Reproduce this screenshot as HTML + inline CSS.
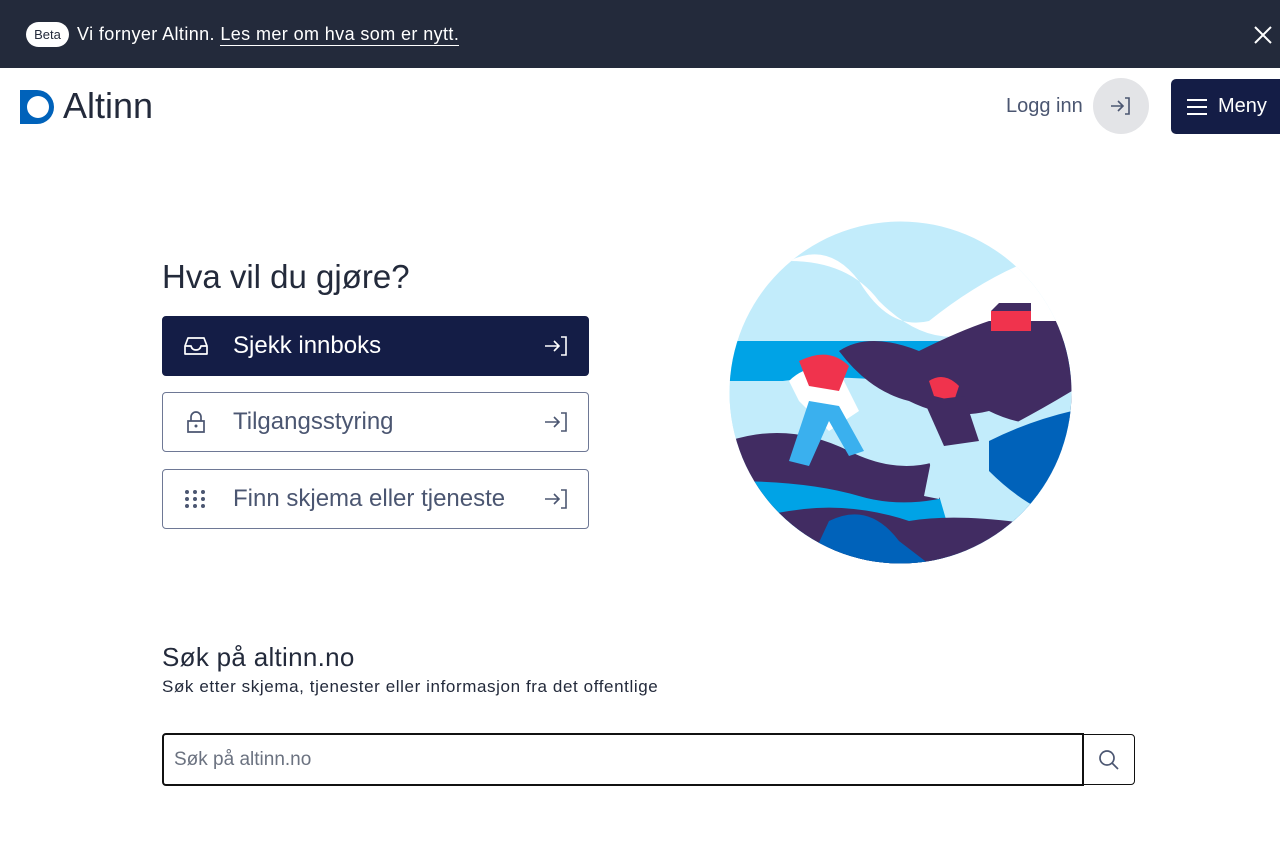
<!DOCTYPE html>
<html><head><meta charset="utf-8"><style>
*{box-sizing:border-box;margin:0;padding:0}
body{width:1280px;height:853px;overflow:hidden;background:#fff;font-family:"Liberation Sans",sans-serif;position:relative}
.banner{position:absolute;left:0;top:0;width:1280px;height:68px;background:#232a3b;color:#fff}
.beta{position:absolute;left:26px;top:22px;width:43px;height:25px;border-radius:13px;background:#fff;color:#232a3b;font-size:13px;line-height:25px;text-align:center}
.btxt{position:absolute;left:77px;top:23px;font-size:18px;line-height:22px;white-space:nowrap;letter-spacing:0.4px}
.btxt u{text-decoration:none;border-bottom:1.5px solid #fff;padding-bottom:1px}
.x{position:absolute;left:1253px;top:25px}
.logo{position:absolute;left:20px;top:90px}
.alt{position:absolute;left:63px;top:86px;font-size:36px;color:#232a3b;line-height:40px}
.logg{position:absolute;left:1006px;top:95px;font-size:20px;color:#4b5671}
.lcirc{position:absolute;left:1093px;top:78px;width:56px;height:56px;border-radius:50%;background:#e3e4e7}
.meny{position:absolute;left:1171px;top:79px;width:120px;height:55px;border-radius:5px;background:#141d46;color:#fff;font-size:20px}
h1{position:absolute;left:162px;top:258px;font-size:33px;font-weight:normal;color:#232a3b}
.btn{position:absolute;left:162px;width:427px;height:60px;border:1px solid #6e7895;border-radius:4px;color:#4b5671;font-size:24px}
.btn span{position:absolute;left:70px;top:15px;line-height:28px}
.btn .ic{position:absolute;left:20px;top:18px}
.btn .ar{position:absolute;left:381px;top:18px}
.dark{background:#141d46;color:#fff;border-color:#141d46}
h2{position:absolute;left:162px;top:642px;font-size:26px;font-weight:normal;color:#232a3b;letter-spacing:0.3px}
.sub{position:absolute;left:162px;top:677px;font-size:17px;color:#232a3b;letter-spacing:0.6px}
.inp{position:absolute;left:162px;top:733px;width:922px;height:53px;border:2px solid #111;border-radius:4px 0 0 4px;font-size:19px;color:#6b7280;padding:14px 10px}
.sb{position:absolute;left:1082px;top:734px;width:53px;height:51px;border:1.5px solid #111;border-radius:0 4px 4px 0}
</style></head><body>
<div class="banner">
<div class="beta">Beta</div>
<div class="btxt">Vi fornyer Altinn. <u>Les mer om hva som er nytt.</u></div>
<svg class="x" width="20" height="20" viewBox="0 0 20 20"><path d="M2 2L18 18M18 2L2 18" stroke="#fff" stroke-width="2"/></svg>
</div>
<svg class="logo" width="34" height="34" viewBox="0 0 34 34"><path d="M0 0H17A17 17 0 0 1 17 34H0Z" fill="#0062ba"/><circle cx="18" cy="17" r="11" fill="#fff"/></svg>
<div class="alt">Altinn</div>
<div class="logg">Logg inn</div>
<div class="lcirc"><svg style="position:absolute;left:17px;top:18px" width="22" height="20" viewBox="0 0 22 20"><path d="M1 10H13M8 5L13 10L8 15M15 2H19V18H15" fill="none" stroke="#4b5671" stroke-width="1.6"/></svg></div>
<div class="meny"><svg style="position:absolute;left:16px;top:19px" width="20" height="18" viewBox="0 0 20 18"><path d="M0 2H20M0 9H20M0 16H20" stroke="#fff" stroke-width="2"/></svg><span style="position:absolute;left:47px;top:16px">Meny</span></div>

<h1>Hva vil du gjøre?</h1>
<div class="btn dark" style="top:316px"><svg class="ic" width="26" height="22" viewBox="0 0 26 22"><path d="M2 11L5 3H21L24 11V19H2ZM2 11H8Q9 15 13 15Q17 15 18 11H24" fill="none" stroke="#fff" stroke-width="1.7" stroke-linejoin="round"/></svg><span>Sjekk innboks</span><svg class="ar" width="24" height="22" viewBox="0 0 24 22"><path d="M1 11H15M10 6L15 11L10 16M17 2H22V20H17" fill="none" stroke="#fff" stroke-width="1.6"/></svg></div>
<div class="btn" style="top:392px"><svg class="ic" width="26" height="22" viewBox="0 0 26 22"><path d="M8 10V6A5 5 0 0 1 18 6V10M5 10H21V21H5Z" fill="none" stroke="#4b5671" stroke-width="1.7"/><circle cx="13" cy="15" r="1.5" fill="#4b5671"/></svg><span>Tilgangsstyring</span><svg class="ar" width="24" height="22" viewBox="0 0 24 22"><path d="M1 11H15M10 6L15 11L10 16M17 2H22V20H17" fill="none" stroke="#4b5671" stroke-width="1.6"/></svg></div>
<div class="btn" style="top:469px"><svg class="ic" width="26" height="22" viewBox="0 0 26 22" fill="#4b5671"><circle cx="4" cy="4" r="2"/><circle cx="12" cy="4" r="2"/><circle cx="20" cy="4" r="2"/><circle cx="4" cy="11" r="2"/><circle cx="12" cy="11" r="2"/><circle cx="20" cy="11" r="2"/><circle cx="4" cy="18" r="2"/><circle cx="12" cy="18" r="2"/><circle cx="20" cy="18" r="2"/></svg><span>Finn skjema eller tjeneste</span><svg class="ar" width="24" height="22" viewBox="0 0 24 22"><path d="M1 11H15M10 6L15 11L10 16M17 2H22V20H17" fill="none" stroke="#4b5671" stroke-width="1.6"/></svg></div>

<svg style="position:absolute;left:729px;top:221px" width="343" height="343" viewBox="0 0 343 343">
<defs><clipPath id="c"><circle cx="171.5" cy="171.5" r="171"/></clipPath></defs>
<g clip-path="url(#c)">
<rect width="343" height="343" fill="#c2ecfb"/>
<path d="M60 40Q100 20 130 60Q160 110 200 100Q250 60 300 40L343 60V110Q300 90 250 110Q200 130 150 80Q120 40 60 40Z" fill="#fff"/>
<rect y="120" width="343" height="40" fill="#00a3e6"/>
<path d="M0 170Q80 150 160 160Q240 130 343 150V343H0Z" fill="#c2ecfb"/>
<path d="M110 130Q140 110 190 130Q230 110 260 100H343V200Q300 210 260 190Q220 200 180 180Q140 170 110 130Z" fill="#412c62"/>
<rect x="262" y="90" width="40" height="20" fill="#f0334d"/><path d="M262 90L270 82H302V90Z" fill="#412c62"/>
<path d="M0 220Q60 200 120 230Q180 260 230 230Q280 210 343 230V343H0Z" fill="#412c62"/>
<path d="M0 260Q80 260 130 275Q180 290 240 270Q300 250 343 270V343H0Z" fill="#00a3e6"/>
<path d="M200 240Q260 220 343 170V343H230Z" fill="#c2ecfb"/>
<path d="M260 220Q300 200 343 190V300Q300 290 260 250Z" fill="#0062ba"/>
<path d="M60 290Q120 280 180 300Q240 290 343 310V343H0V300Z" fill="#412c62"/>
<path d="M100 300Q140 280 170 320L200 343H80Z" fill="#0062ba"/>
<path d="M60 160Q80 140 110 150L130 190L100 210L70 180Z" fill="#fff"/>
<path d="M70 140Q100 125 120 145L110 170L80 165Z" fill="#f0334d"/>
<path d="M80 180L60 240L80 245L100 200L120 235L135 230L110 185Z" fill="#3ab0ee"/>
<path d="M200 160Q215 150 230 165L225 180L205 175Z" fill="#f0334d"/>
<path d="M195 180L235 175L250 220L215 225Z" fill="#412c62"/>
<path d="M205 225L195 275L210 278L222 235L235 280L250 275L240 225Z" fill="#c2ecfb"/>
</g></svg>

<h2>Søk på altinn.no</h2>
<div class="sub">Søk etter skjema, tjenester eller informasjon fra det offentlige</div>
<div class="inp">Søk på altinn.no</div>
<div class="sb"><svg style="position:absolute;left:15px;top:14px" width="22" height="22" viewBox="0 0 22 22"><circle cx="9" cy="9" r="7" fill="none" stroke="#4b5671" stroke-width="1.7"/><path d="M14 14L20 20" stroke="#4b5671" stroke-width="1.7"/></svg></div>
</body></html>
